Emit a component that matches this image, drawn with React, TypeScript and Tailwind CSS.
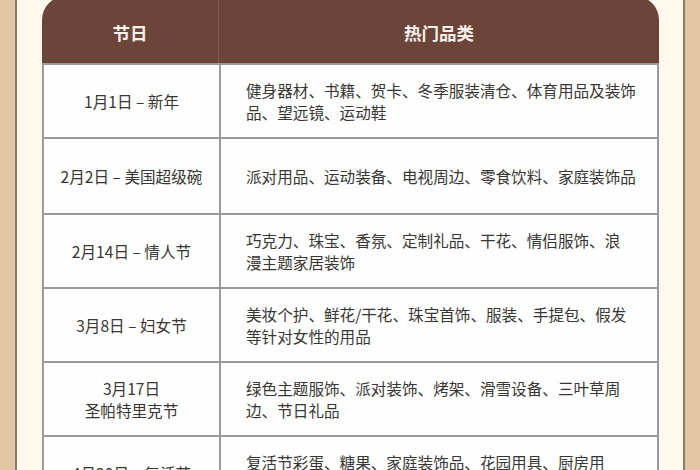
import type { ReactNode } from "react";

type Linha = {
  data: ReactNode;
  itens: ReactNode;
  altura: string;
};

const linhas: Linha[] = [
  {
    data: "1月1日 – 新年",
    itens: (
      <>
        健身器材、书籍、贺卡、冬季服装清仓、体育用品及装饰
        <br />
        品、望远镜、运动鞋
      </>
    ),
    altura: "h-[74px]",
  },
  {
    data: "2月2日 – 美国超级碗",
    itens: "派对用品、运动装备、电视周边、零食饮料、家庭装饰品",
    altura: "h-[76px]",
  },
  {
    data: "2月14日 – 情人节",
    itens: (
      <>
        巧克力、珠宝、香氛、定制礼品、干花、情侣服饰、浪
        <br />
        漫主题家居装饰
      </>
    ),
    altura: "h-[74px]",
  },
  {
    data: "3月8日 – 妇女节",
    itens: (
      <>
        美妆个护、鲜花/干花、珠宝首饰、服装、手提包、假发
        <br />
        等针对女性的用品
      </>
    ),
    altura: "h-[74px]",
  },
  {
    data: (
      <>
        3月17日
        <br />
        圣帕特里克节
      </>
    ),
    itens: (
      <>
        绿色主题服饰、派对装饰、烤架、滑雪设备、三叶草周
        <br />
        边、节日礼品
      </>
    ),
    altura: "h-[74px]",
  },
  {
    data: "4月20日 – 复活节",
    itens: (
      <>
        复活节彩蛋、糖果、家庭装饰品、花园用具、厨房用
        <br />
        品
      </>
    ),
    altura: "h-[74px]",
  },
];

function App() {
  return (
    <div
      className="flex h-[470px] w-[700px] overflow-hidden bg-[#fdf8ec]"
      style={{ fontFamily: '"Noto Sans CJK SC", "Noto Sans", sans-serif' }}
    >
      {/* moldura esquerda */}
      <div className="w-[15px] shrink-0 bg-[#e1c7a3]" />
      <div className="w-[2px] shrink-0 bg-[#8d7a66]" />

      <div className="flex flex-1 justify-center pl-[25px] pr-[24px]">
        <div className="mt-[-4px] w-[617px] shrink-0">
          {/* cabeçalho */}
          <div className="grid h-[69px] grid-cols-[177px_440px] rounded-t-[24px] border-b-2 border-[#9a9a9a] bg-[#6b4539] text-[17.5px] font-bold text-[#f7efea]">
            <div className="flex items-center justify-center border-r border-[#7e5a4e] pt-[7px]">
              节日
            </div>
            <div className="flex items-center justify-center pt-[7px]">热门品类</div>
          </div>

          {/* linhas */}
          {linhas.map((linha, i) => (
            <div
              key={i}
              className={`grid grid-cols-[177px_440px] border-x-2 border-b-2 border-[#9a9a9a] bg-[#fefefe] text-[15.6px] leading-[22px] text-[#383634] ${linha.altura}`}
            >
              <div className="flex items-center justify-center border-r-2 border-[#9a9a9a] text-center">
                <span>{linha.data}</span>
              </div>
              <div className="flex items-center pl-[25px] whitespace-nowrap">
                <span>{linha.itens}</span>
              </div>
            </div>
          ))}
        </div>
      </div>

      {/* moldura direita */}
      <div className="w-[2px] shrink-0 bg-[#8d7a66]" />
      <div className="w-[15px] shrink-0 bg-[#e1c7a3]" />
    </div>
  );
}

export default App;
